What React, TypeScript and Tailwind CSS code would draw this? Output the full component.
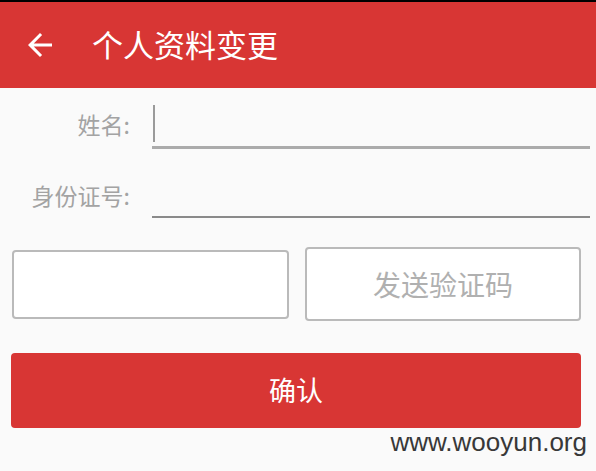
import React from "react";

export default function App() {
  const cjk = { fontFamily: '"Noto Sans CJK SC", "Noto Sans", sans-serif' };
  return (
    <div className="w-[596px] h-[471px] bg-[#fafafa] overflow-hidden" style={cjk}>
      <div className="h-[88px] border-t-2 border-black bg-[#d83634] flex items-center">
        <svg className="ml-[22px] w-[36px] h-[36px]" viewBox="0 0 24 24" fill="white">
          <path d="M20 11H7.83l5.59-5.59L12 4l-8 8 8 8 1.41-1.41L7.83 13H20v-2z" />
        </svg>
        <div className="ml-[34px] text-white text-[31px] leading-[36px] -mt-[2px]">个人资料变更</div>
      </div>

      <div className="flex items-end mt-[12px]">
        <div className="w-[130px] text-right text-[23px] leading-[30px] text-[#a3a3a3] mb-[10px]">姓名:</div>
        <div className="ml-[22px] mr-[6px] flex-1 h-[49px] border-b-[3px] border-[#ababab] flex items-start pt-[5px]">
          <div className="ml-[1px] w-[2px] h-[37px] bg-[#9a9a9a]" />
        </div>
      </div>

      <div className="flex items-end mt-[21px]">
        <div className="w-[130px] text-right text-[23px] leading-[30px] text-[#a3a3a3] mb-[8px]">身份证号:</div>
        <div className="ml-[22px] mr-[6px] flex-1 h-[48px] border-b-2 border-[#8a8a8a]" />
      </div>

      <div className="flex items-center mt-[29px] h-[74px]">
        <div className="ml-[12px] w-[277px] h-[69px] bg-white border-2 border-[#bababa] rounded-[4px]" />
        <div className="ml-[16px] w-[276px] h-[74px] bg-white border-2 border-[#bababa] rounded-[4px] flex items-center justify-center text-[28px] text-[#b0b0b0]">
          发送验证码
        </div>
      </div>

      <div className="mt-[32px] ml-[11px] w-[570px] h-[75px] rounded-[4px] bg-[#d83634] flex items-center justify-center text-white text-[27px]">
        确认
      </div>

      <div
        className="mt-[3px] pr-[9px] text-right text-[26px] leading-[22px] text-[#383838]"
        style={{ fontFamily: '"Liberation Sans", Arial, sans-serif' }}
      >
        www.wooyun.org
      </div>
    </div>
  );
}
